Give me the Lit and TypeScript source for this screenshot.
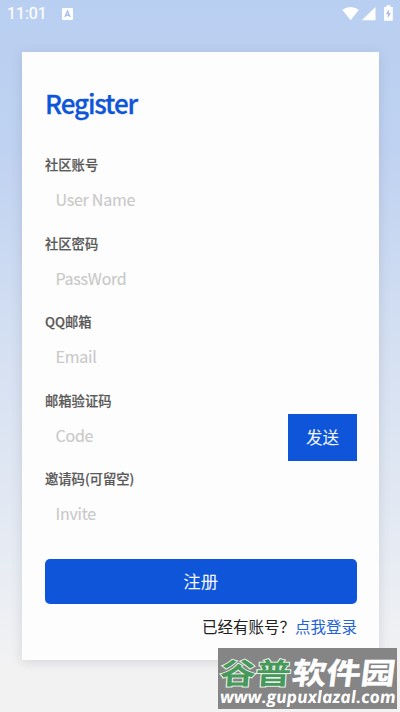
import { LitElement, html, css } from "lit";
import { customElement, property } from "lit/decorators.js";

@customElement("form-field")
class FormField extends LitElement {
  @property() label = "";
  @property() hint = "";
  static styles = css`
    :host { display: flex; flex-direction: column; height: 78.5px; }
    .label { height: 24px; line-height: 22.6px; font-size: 13.3px; font-weight: 500; color: #595959; -webkit-text-stroke: 0.2px #595959; white-space: nowrap; }
    .row { display: flex; justify-content: space-between; height: 47px; }
    .hint { padding-left: 10.5px; line-height: 43.6px; font-size: 16px; letter-spacing: -.25px; color: #c9c9c9; -webkit-text-stroke: 0.15px #c9c9c9; }
  `;
  render() {
    return html`<div class="label">${this.label}</div>
      <div class="row"><span class="hint">${this.hint}</span><slot></slot></div>`;
  }
}

@customElement("status-bar")
class StatusBar extends LitElement {
  static styles = css`
    :host { display: flex; align-items: center; height: 28px; padding: 0 7px; box-sizing: border-box; color: #fff; font: 400 16px/28px Roboto, sans-serif; }
    .time { width: 55px; -webkit-text-stroke: 0.2px #fff; }
    .grow { flex: 1; }
    svg { display: block; }
  `;
  render() {
    return html`<span class="time">11:01</span>
      <svg width="11" height="12" viewBox="0 0 11 12"><rect width="11" height="12" rx="1.2" fill="#fff"/><path d="M2.9 9 5.5 3 8.1 9M3.8 7.2h3.4" fill="none" stroke="#a9c0ea" stroke-width="1.4"/></svg>
      <span class="grow"></span>
      <svg width="51" height="18" viewBox="0 0 51 18" fill="#fff">
        <path d="M.3 4.8Q8.5-1 16.9 4.8L8.6 15.2Z"/>
        <path d="M33.5 2V15.2H19.8Z"/>
        <path d="M44.5.2h4v1.7h2.3V15.8H42V1.9h2.5Z"/>
        <path d="M46.8 4.2 43.9 9.2h1.9v4.1l3.1-5.3H47Z" fill="#a9bee6"/>
      </svg>`;
  }
}

@customElement("site-mark")
class SiteMark extends LitElement {
  static styles = css`
    :host { position: absolute; left: 218px; top: 648px; width: 179px; height: 61px; background: #858585; box-sizing: border-box; overflow: hidden; }
    svg { display: block; }
    .name { font: 700 33px "Noto Sans CJK SC", sans-serif; }
    .url { font: italic 700 17px "Open Sans", sans-serif; }
  `;
  render() {
    return html`<svg width="179" height="61" viewBox="0 0 179 61">
      <text class="name" x="0" y="0" textLength="71" lengthAdjust="spacingAndGlyphs" fill="#46995a" stroke="#e7f1e8" stroke-width="2.2" paint-order="stroke" transform="translate(1.5 35.5) skewX(-4) scale(1 .88)">谷普</text>
      <text class="name" x="0" y="0" textLength="103" lengthAdjust="spacingAndGlyphs" fill="#fff" stroke="#fff" stroke-width=".5" transform="translate(73 35.5) skewX(-7) scale(1 .9)">软件园</text>
      <text class="url" x="0" y="0" textLength="175.5" lengthAdjust="spacingAndGlyphs" fill="#fff" transform="translate(2.5 55) skewX(5)">www.gupuxlazal.com</text>
    </svg>`;
  }
}

@customElement("app-root")
class AppRoot extends LitElement {
  static styles = css`
    :host { display: block; position: relative; width: 400px; height: 712px; overflow: hidden; box-sizing: border-box; background: linear-gradient(#b9cff1 0, #bfd2f1 150px, #d5e0f2 350px, #e6ebf3 550px, #f2f2f3 665px); font-family: "Noto Sans CJK SC", sans-serif; }
    .card { margin: 24px 21px 0 22px; height: 608px; padding: 30px 22px 0 23px; box-sizing: border-box; background: #fdfdfd; box-shadow: 0 2px 11px rgba(90, 90, 100, .18); }
    h1 { margin: 0; height: 72px; line-height: 42px; font-size: 26px; font-weight: 500; letter-spacing: -1.1px; color: #0e55d9; -webkit-text-stroke: 0.3px #0e55d9; }
    .send { width: 69px; height: 47px; flex: none; background: #0e55d9; color: #f4f7fd; text-align: center; font-size: 16.5px; line-height: 46px; }
    .submit { height: 45px; margin: 12px 0 0 -.5px; border-radius: 5px; background: #0e55d9; color: #f4f7fd; text-align: center; font-size: 17.4px; line-height: 44px; }
    .login { display: flex; justify-content: flex-end; font-size: 15.5px; line-height: 45px; color: #222; }
    .login a { color: #2262dc; }
  `;
  render() {
    return html`<status-bar></status-bar>
      <main class="card">
        <h1>Register</h1>
        <form-field label="社区账号" hint="User Name"></form-field>
        <form-field label="社区密码" hint="PassWord"></form-field>
        <form-field label="QQ邮箱" hint="Email"></form-field>
        <form-field label="邮箱验证码" hint="Code"><div class="send">发送</div></form-field>
        <form-field label="邀请码(可留空)" hint="Invite"></form-field>
        <div class="submit">注册</div>
        <div class="login"><span>已经有账号？</span><a>点我登录</a></div>
      </main>
      <site-mark></site-mark>`;
  }
}
